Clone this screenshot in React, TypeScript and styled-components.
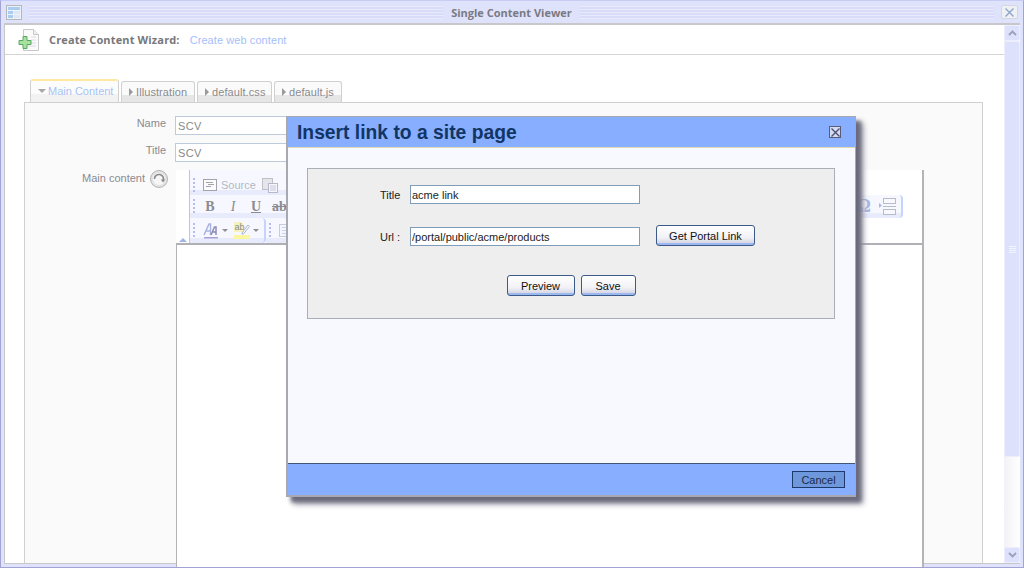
import React from 'react';
import { styled, createGlobalStyle } from 'styled-components';

const SANS = '"Liberation Sans", Arial, sans-serif';

const Global = createGlobalStyle`
    html, body { margin: 0; padding: 0; background: #fff; }
    * { box-sizing: border-box; }
    body { font-family: ${SANS}; font-size: 11px; }
`;

const WindowIcon = () => (
    <svg width="16" height="15" viewBox="0 0 16 15">
        <rect x="0.5" y="0.5" width="15" height="14" fill="#eef2f8" stroke="#b4b8bc" />
        <rect x="2" y="2" width="12" height="3" fill="#a8cdf0" />
        <rect x="2" y="6" width="5" height="3" fill="#a8cdf0" />
        <rect x="8" y="6" width="6" height="3" fill="#dce8f6" />
        <rect x="2" y="10" width="5" height="3" fill="#a8cdf0" />
        <rect x="8" y="10" width="6" height="3" fill="#dce8f6" />
    </svg>
);

const AddContentIcon = () => (
    <svg width="22" height="24" viewBox="0 0 22 24">
        <path d="M5.5 1.5h10l5 5v16h-15z" fill="#fafafa" stroke="#c8c8c8" />
        <path d="M15.5 1.5v5h5" fill="#eef0f4" stroke="#c8c8c8" />
        <path d="M13 9h5M13 12h5M13 15h5M10 18h8" stroke="#dcdce4" />
        <path d="M5 8.5h4v4h4v4H9v4H5v-4H1v-4h4z" fill="#a8e0a0" stroke="#5aa860" />
    </svg>
);

const CloseX = ({ color = '#505070' }: { color?: string }) => (
    <svg width="9" height="9" viewBox="0 0 9 9">
        <path d="M0.5 0.5l8 8M8.5 0.5l-8 8" stroke={color} strokeWidth="1.4" fill="none" />
    </svg>
);

const RefreshIcon = () => (
    <svg width="18" height="18" viewBox="0 0 18 18">
        <circle cx="9" cy="9" r="8.5" fill="#e4e4e4" stroke="#b4b4b4" />
        <circle cx="9" cy="9" r="6" fill="#f6f6f6" />
        <path d="M4.5 9a4.5 4.5 0 1 1 8.6 1.8" fill="none" stroke="#8a8a8a" strokeWidth="1.6" />
        <path d="M10.8 9.6h4.4l-2.2 3z" fill="#8a8a8a" />
    </svg>
);

const SourceIcon = () => (
    <svg width="15" height="13" viewBox="0 0 15 13">
        <rect x="0.5" y="0.5" width="13" height="11" fill="#fbfbff" stroke="#a4a4a8" />
        <path d="M3 3.5h7M5 5.5h6M3 7.5h5" stroke="#a4a4a8" />
    </svg>
);

const PasteIcon = () => (
    <svg width="16" height="15" viewBox="0 0 16 15">
        <rect x="0.5" y="0.5" width="10" height="11" fill="#e6e6ea" stroke="#c0c0c6" />
        <rect x="6.5" y="5.5" width="9" height="9" fill="#f6f7fe" stroke="#b4b8c8" />
        <path d="M8 8h6M8 10h6M8 12h6" stroke="#c4c8d8" />
    </svg>
);

const FontColorIcon = () => (
    <svg width="16" height="16" viewBox="0 0 16 16">
        <path d="M1 12L6 1h1.5v11M3 8h4" fill="none" stroke="#a8b4e0" strokeWidth="1.5" />
        <path d="M8 12l3.5-8H13v8M9 9h4" fill="none" stroke="#9088b8" strokeWidth="1.5" />
        <rect x="1" y="14" width="14" height="1.5" fill="#a8a0d0" />
    </svg>
);

const HighlightIcon = () => (
    <svg width="16" height="17" viewBox="0 0 16 17">
        <rect x="0" y="13" width="16" height="4" fill="#fbf7a0" />
        <rect x="0" y="0" width="9" height="10" fill="#f6f2c0" />
        <text x="0.5" y="8" fontSize="9" fontFamily="Liberation Sans, sans-serif" fill="#8a8a8a">ab</text>
        <path d="M8 11l6-8 1.5 1.5-6 7.5H8z" fill="#fafaff" stroke="#a8b4c8" />
    </svg>
);

const JustifyIcon = () => (
    <svg width="14" height="13" viewBox="0 0 14 13">
        <rect x="0.5" y="0.5" width="13" height="12" fill="#f4f6fe" stroke="#c4cce4" />
        <path d="M3 3.5h8M3 6.5h8M3 9.5h8" stroke="#c8d4f0" />
    </svg>
);

const PageBreakIcon = () => (
    <svg width="17" height="17" viewBox="0 0 17 17">
        <path d="M0 5l3 2.5L0 10z" fill="#a8b8e8" />
        <rect x="4.5" y="0.5" width="12" height="5" fill="#f8f8ff" stroke="#b8bcc8" />
        <rect x="4.5" y="11.5" width="12" height="5" fill="#f8f8ff" stroke="#b8bcc8" />
        <path d="M4 8.5h13" stroke="#b8bcc8" />
    </svg>
);

const ScrollChevron = ({ up }: { up?: boolean }) => (
    <svg width="9" height="6" viewBox="0 0 9 6">
        <path d={up ? 'M1 5l3.5-3.5L8 5' : 'M1 1l3.5 3.5L8 1'} fill="none" stroke="#9aa0b8" strokeWidth="1.8" />
    </svg>
);

const Frame = styled.div`
    width: 1024px; height: 568px; overflow: hidden; position: relative;
    display: flex; flex-direction: column;
    background: #dfe2fb; border: 1px solid #a2a2d4; border-top-color: #c8ccf4;
`;

const TitleBar = styled.div`
    height: 22px; flex-shrink: 0; padding: 4px 5px 0 5px;
    display: flex; align-items: flex-start; gap: 7px;
`;

const TitleLines = styled.div`
    flex: 1; height: 13px; margin-top: 1px; display: flex; justify-content: center;
    background: repeating-linear-gradient(to bottom, #e9ebfd 0 1px, #d9dcf9 1px 3px);
`;

const TitleText = styled.span`
    background: #dfe2fb; padding: 0 8px; height: 13px; line-height: 13px;
    font-family: "Open Sans", sans-serif; font-weight: 700; font-size: 11px; color: #7a7a82;
`;

const WindowClose = styled.div`
    width: 17px; height: 14px; border-radius: 2px;
    background: #eef0f4; border: 1px solid #d4d6e4;
    display: flex; align-items: center; justify-content: center;
`;

const FrameBody = styled.div`
    flex: 1; min-height: 0; display: flex;
    margin: 0 3px 3px 3px;
    border: 1px solid #c8c8cc; border-top-width: 2px; border-right: none;
`;

const Content = styled.div`
    flex: 1; min-width: 0; background: #fff; display: flex; flex-direction: column;
`;

const WizardHeader = styled.div`
    height: 30px; flex-shrink: 0; padding-left: 13px; border-bottom: 1px solid #d4d4d4;
    display: flex; align-items: center; background: #fff;
`;

const WizardLabel = styled.span`
    font-family: "Open Sans", sans-serif; font-weight: 700; font-size: 11px; letter-spacing: 0.14px; color: #77777a; margin-left: 9px;
`;

const WizardLink = styled.span`
    font-size: 11px; color: #a4c0f8; margin-left: 10px; letter-spacing: 0.08px;
`;

const TabArea = styled.div`
    flex: 1; min-height: 0; padding: 24px 21px 0 19px; display: flex; flex-direction: column;
`;

const Tabs = styled.div`
    height: 23px; flex-shrink: 0; padding-left: 6px; display: flex; align-items: flex-end; gap: 2px;
`;

const Tab = styled.div<{ $active?: boolean; $w: number }>`
    height: ${({ $active }) => ($active ? '23px' : '21px')};
    width: ${({ $w }) => $w}px;
    padding: 0 0 1px 7px; display: flex; align-items: center; gap: 3px;
    border: 1px solid #d0d0d0; border-bottom: none; border-radius: 3px 3px 0 0;
    border-top: ${({ $active }) => ($active ? '2px solid #ffe9a0' : '1px solid #d0d0d0')};
    background: ${({ $active }) => ($active ? 'linear-gradient(#fcfcfc 60%, #f2f2f2 60%)' : 'linear-gradient(#fafafa 65%, #e6e6e6 65%)')};
    color: ${({ $active }) => ($active ? '#a8c2f4' : '#8a8a8e')};
    font-size: 11px; letter-spacing: ${({ $active }) => ($active ? '0' : '0.08px')};
    white-space: nowrap;
`;

const ArrowRight = styled.span`
    width: 0; height: 0; border-left: 4px solid #9a9a9a; border-top: 4px solid transparent; border-bottom: 4px solid transparent;
`;

const ArrowDown = styled.span`
    width: 0; height: 0; margin-right: -1px; border-top: 4px solid #a8a8a8; border-left: 4px solid transparent; border-right: 4px solid transparent;
`;

const Pane = styled.div`
    flex: 1; min-height: 0; background: #fafafa;
    border: 1px solid #d0d0d0; border-bottom: none;
    padding: 13px 58px 0 0;
    display: grid; grid-template-columns: 142px 1fr; grid-auto-rows: min-content; row-gap: 8px;
`;

const FieldLabel = styled.div`
    height: 19px; padding-right: 1px; text-align: right; color: #8a8a92; font-size: 11px; line-height: 15px;
`;

const FieldValue = styled.div`
    padding-left: 8px;
`;

const FieldInput = styled.input`
    width: 400px; height: 19px; border: 1px solid #bccadb; background: #fff; padding: 0 2px;
    font: 11px ${SANS}; color: #888; letter-spacing: 0.3px;
`;

const MainLabel = styled.div`
    height: 19px; margin-right: -1px; display: flex; justify-content: flex-end; align-items: flex-start; gap: 5px;
    color: #8a8a92; font-size: 11px; line-height: 17px;
`;

const EditorArea = styled.div`
    position: relative; margin-left: 9px; height: 420px;
    display: flex; flex-direction: column;
    border-right: 2px solid #b4b4b8; background: #fff;
`;

const ToolStack = styled.div`
    height: 75px; flex-shrink: 0; display: flex; flex-direction: column; padding-left: 13px;
    border-bottom: 2px solid #b0b0b4; position: relative;
`;

const ToolRow = styled.div<{ $h: number }>`
    height: ${({ $h }) => $h}px; display: flex; align-items: stretch; border-left: 1px solid #c0c4d4;
`;

const ToolGroup = styled.div<{ $w: number; $top?: number; $open?: boolean }>`
    width: ${({ $w }) => $w}px; height: 100%; padding: ${({ $top }) => $top ?? 0}px 5px 0 3px;
    display: flex; align-items: center; gap: 8px; flex-shrink: 0;
    background: linear-gradient(to top, #e8ebfc 5px, #f7f8ff 5px);
    color: #9a9a9e;
    border-right: ${({ $open }) => ($open ? 'none' : '2px solid #c4d4fc')};
    border-radius: 0 4px 4px 0;
`;

const Grip = styled.span`
    width: 2px; height: 15px; flex-shrink: 0;
    background: repeating-linear-gradient(to bottom, #b4bcf0 0 2px, transparent 2px 4px);
`;

const SourceText = styled.span`
    font-size: 11px; color: #b0b8c8; margin: 0 -2px 0 -5px;
`;

const StyleGlyph = styled.span<{ $kind: 'b' | 'i' | 'u' | 's' }>`
    font-family: "Liberation Serif", serif; font-size: 14px; width: 14px; margin-right: 1px; text-align: center; color: #8c8c90;
    font-weight: ${({ $kind }) => ($kind === 'i' ? 400 : 700)};
    font-style: ${({ $kind }) => ($kind === 'i' ? 'italic' : 'normal')};
    text-decoration: ${({ $kind }) => ($kind === 'u' ? 'underline' : $kind === 's' ? 'line-through' : 'none')};
    &:first-of-type { margin-left: -1px; }
`;

const SmallCaret = styled.span`
    width: 0; height: 0; border-top: 3px solid #909090; border-left: 3px solid transparent; border-right: 3px solid transparent;
    margin: 0 -2px 0 -5px;
`;

const Omega = styled.span`
    font-family: "Liberation Serif", serif; font-size: 18px; font-weight: 700; color: #a8b8e4;
`;

const Spacer = styled.span`
    flex: 1;
`;

const CollapseArrow = styled.span`
    position: absolute; left: 3px; bottom: 1px; width: 0; height: 0;
    border-bottom: 4px solid #a0b4e8; border-left: 4px solid transparent; border-right: 4px solid transparent;
`;

const EditorBody = styled.div`
    flex: 1; border-left: 1px solid #b4b4b8; background: #fff;
`;

const ScrollBar = styled.div`
    width: 16px; flex-shrink: 0; background: linear-gradient(to right, #f2f2f6, #fff);
    display: flex; flex-direction: column;
`;

const ScrollButton = styled.div`
    height: 16px; flex-shrink: 0; background: #dde1fb; border: 1px solid #eceefe; border-radius: 2px;
    display: flex; align-items: center; justify-content: center;
`;

const ScrollThumb = styled.div`
    height: 416px; flex-shrink: 0; background: #dde1fb; border: 1px solid #eceefe; border-radius: 2px;
    display: flex; flex-direction: column; align-items: center; justify-content: center; gap: 1px;
`;

const GripLine = styled.span`
    width: 7px; height: 1px; background: #f4f6ff;
`;

const ScrollGap = styled.div`
    flex: 1;
`;

const Dialog = styled.div`
    position: absolute; left: 285px; top: 115px; width: 570px; height: 381px;
    background: #f7f9ff; border: 2px solid #a8a8b0; border-right-width: 1px; border-top-width: 1px;
    box-shadow: 5px 5px 4px #6a6a7c, 7px 7px 6px #9a9aa8;
    display: flex; flex-direction: column;
`;

const DialogHeader = styled.div`
    height: 31px; flex-shrink: 0; background: #88aeff; border-bottom: 1px solid #e0dcb0;
    padding: 0 14px 0 9px; display: flex; align-items: center; justify-content: space-between;
`;

const DialogTitle = styled.h2`
    margin: 2px 0 0; font: 700 19.3px ${SANS}; color: #123564;
`;

const DialogClose = styled.div`
    width: 12px; height: 12px; border: 1px solid #5a5a7a; background: #d4dcf4;
    display: flex; align-items: center; justify-content: center;
`;

const DialogBody = styled.div`
    flex: 1; padding: 20px 20px 0 19px;
`;

const FormPanel = styled.div`
    height: 151px; background: #eeeeee; border: 1px solid #aaaeb8;
    padding: 15px 0 0 72px; display: flex; flex-direction: column;
`;

const FormRow = styled.div<{ $top?: number }>`
    display: flex; align-items: center; height: 21px; margin-top: ${({ $top }) => $top ?? 0}px;
`;

const DialogLabel = styled.label`
    width: 30px; font: 11px ${SANS}; color: #222;
`;

const DialogInput = styled.input`
    width: 230px; height: 19px; border: 1px solid #7f9db9; background: #fff; padding: 0 1px;
    font: 11px ${SANS}; color: #222;
`;

const XpButton = styled.button<{ $w: number }>`
    width: ${({ $w }) => $w}px; height: 21px; padding: 1px 0 0; font: 11px ${SANS}; color: #111;
    border: 1px solid #3c5a88; border-radius: 3px;
    background: linear-gradient(#fff, #f2f2f6 60%, #d8d8e6 88%, #9cb8f0 88%);
`;

const PortalButton = styled(XpButton)`
    margin: 0 0 2px 16px;
`;

const FormActions = styled.div`
    display: flex; justify-content: center; gap: 6px; margin-top: 28px; margin-left: -72px;
`;

const DialogFooter = styled.div`
    height: 32px; flex-shrink: 0; background: #88aeff; border-top: 1px solid #44557a;
    padding: 7px 10px 0 0; display: flex; justify-content: flex-end; align-items: flex-start;
`;

const CancelButton = styled.button`
    width: 53px; height: 17px; padding: 0; border: 1px solid #1e3a6a; background: #6f98dc;
    font: 11px ${SANS}; color: #1a2a48;
`;

export default function App() {
    return (
        <Frame>
            <Global />
            <TitleBar>
                <WindowIcon />
                <TitleLines>
                    <TitleText>Single Content Viewer</TitleText>
                </TitleLines>
                <WindowClose><CloseX color="#8ea4c8" /></WindowClose>
            </TitleBar>
            <FrameBody>
                <Content>
                    <WizardHeader>
                        <AddContentIcon />
                        <WizardLabel>Create Content Wizard:</WizardLabel>
                        <WizardLink>Create web content</WizardLink>
                    </WizardHeader>
                    <TabArea>
                        <Tabs>
                            <Tab $active $w={89}><ArrowDown />Main Content</Tab>
                            <Tab $w={74}><ArrowRight />Illustration</Tab>
                            <Tab $w={75}><ArrowRight />default.css</Tab>
                            <Tab $w={68}><ArrowRight />default.js</Tab>
                        </Tabs>
                        <Pane>
                            <FieldLabel>Name</FieldLabel>
                            <FieldValue><FieldInput readOnly value="SCV" /></FieldValue>
                            <FieldLabel>Title</FieldLabel>
                            <FieldValue><FieldInput readOnly value="SCV" /></FieldValue>
                            <MainLabel>Main content<RefreshIcon /></MainLabel>
                            <EditorArea>
                                <ToolStack>
                                    <ToolRow $h={25}>
                                        <ToolGroup $w={500} $top={5} $open>
                                            <Grip />
                                            <SourceIcon />
                                            <SourceText>Source</SourceText>
                                            <PasteIcon />
                                        </ToolGroup>
                                    </ToolRow>
                                    <ToolRow $h={23}>
                                        <ToolGroup $w={713}>
                                            <Grip />
                                            <StyleGlyph $kind="b">B</StyleGlyph>
                                            <StyleGlyph $kind="i">I</StyleGlyph>
                                            <StyleGlyph $kind="u">U</StyleGlyph>
                                            <StyleGlyph $kind="s">abc</StyleGlyph>
                                            <Spacer />
                                            <Omega>Ω</Omega>
                                            <PageBreakIcon />
                                        </ToolGroup>
                                    </ToolRow>
                                    <ToolRow $h={25}>
                                        <ToolGroup $w={76}>
                                            <Grip />
                                            <FontColorIcon />
                                            <SmallCaret />
                                            <HighlightIcon />
                                            <SmallCaret />
                                        </ToolGroup>
                                        <ToolGroup $w={60} $open>
                                            <Grip />
                                            <JustifyIcon />
                                        </ToolGroup>
                                    </ToolRow>
                                    <CollapseArrow />
                                </ToolStack>
                                <EditorBody />
                            </EditorArea>
                        </Pane>
                    </TabArea>
                </Content>
                <ScrollBar>
                    <ScrollButton><ScrollChevron up /></ScrollButton>
                    <ScrollThumb><GripLine /><GripLine /><GripLine /><GripLine /></ScrollThumb>
                    <ScrollGap />
                    <ScrollButton><ScrollChevron /></ScrollButton>
                </ScrollBar>
            </FrameBody>
            <Dialog>
                <DialogHeader>
                    <DialogTitle>Insert link to a site page</DialogTitle>
                    <DialogClose><CloseX /></DialogClose>
                </DialogHeader>
                <DialogBody>
                    <FormPanel>
                        <FormRow>
                            <DialogLabel>Title</DialogLabel>
                            <DialogInput readOnly value="acme link" />
                        </FormRow>
                        <FormRow $top={21}>
                            <DialogLabel>Url :</DialogLabel>
                            <DialogInput readOnly value="/portal/public/acme/products" />
                            <PortalButton $w={99}>Get Portal Link</PortalButton>
                        </FormRow>
                        <FormActions>
                            <XpButton $w={68}>Preview</XpButton>
                            <XpButton $w={55}>Save</XpButton>
                        </FormActions>
                    </FormPanel>
                </DialogBody>
                <DialogFooter>
                    <CancelButton>Cancel</CancelButton>
                </DialogFooter>
            </Dialog>
        </Frame>
    );
}
